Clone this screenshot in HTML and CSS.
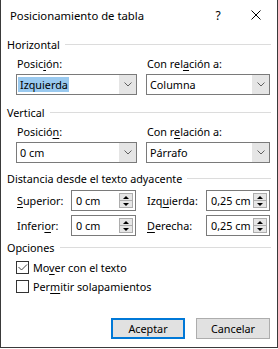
FILE: index.html
```html
<!DOCTYPE html>
<html lang="es">
<head>
  <meta charset="UTF-8">
  <meta name="viewport" content="width=device-width, initial-scale=1.0">
  <title>Posicionamiento de tabla</title>
  <link rel="stylesheet" href="styles.css">
</head>
<body>
  <div class="dialog">
    <div class="titlebar">
      <span class="title">Posicionamiento de tabla</span>
      <span class="help">?</span>
      <span class="close">
        <svg width="10" height="10" viewBox="0 0 10 10"><path d="M0.5 0.5 L9.5 9.5 M9.5 0.5 L0.5 9.5" stroke="#000" stroke-width="1" fill="none"/></svg>
      </span>
    </div>

    <div class="content">
      <div class="group-title">Horizontal</div>
      <div class="pair">
        <div class="field">
          <div class="label">Posic<u>i</u>ón:</div>
          <div class="select">
            <span class="value"><span class="selected">Izquierda</span></span>
            <span class="drop"><svg width="8" height="5" viewBox="0 0 8 5"><path d="M0.5 0.5 L4 4 L7.5 0.5" stroke="#606060" fill="none"/></svg></span>
          </div>
        </div>
        <div class="field">
          <div class="label">Con rel<u>a</u>ción a:</div>
          <div class="select">
            <span class="value">Columna</span>
            <span class="drop"><svg width="8" height="5" viewBox="0 0 8 5"><path d="M0.5 0.5 L4 4 L7.5 0.5" stroke="#606060" fill="none"/></svg></span>
          </div>
        </div>
      </div>

      <div class="group-title second">Vertical</div>
      <div class="pair">
        <div class="field">
          <div class="label">Posició<u>n</u>:</div>
          <div class="select">
            <span class="value">0 cm</span>
            <span class="drop"><svg width="8" height="5" viewBox="0 0 8 5"><path d="M0.5 0.5 L4 4 L7.5 0.5" stroke="#606060" fill="none"/></svg></span>
          </div>
        </div>
        <div class="field">
          <div class="label">Con r<u>e</u>lación a:</div>
          <div class="select">
            <span class="value">Párrafo</span>
            <span class="drop"><svg width="8" height="5" viewBox="0 0 8 5"><path d="M0.5 0.5 L4 4 L7.5 0.5" stroke="#606060" fill="none"/></svg></span>
          </div>
        </div>
      </div>

      <div class="group-title third">Distancia desde el texto adyacente</div>
      <div class="spin-grid">
        <div class="spin-label"><u>S</u>uperior:</div>
        <div class="spin"><span class="value">0 cm</span><span class="arrows"><span class="up"></span><span class="down"></span></span></div>
        <div class="spin-label right">Izq<u>u</u>ierda:</div>
        <div class="spin"><span class="value">0,25 cm</span><span class="arrows"><span class="up"></span><span class="down"></span></span></div>

        <div class="spin-label">Inferi<u>o</u>r:</div>
        <div class="spin"><span class="value">0 cm</span><span class="arrows"><span class="up"></span><span class="down"></span></span></div>
        <div class="spin-label right"><u>D</u>erecha:</div>
        <div class="spin"><span class="value">0,25 cm</span><span class="arrows"><span class="up"></span><span class="down"></span></span></div>
      </div>

      <div class="group-title fourth">Opciones</div>
      <div class="check-row first">
        <span class="checkbox"><svg width="11" height="11" viewBox="0 0 11 11"><path d="M1.5 5 L4.5 8 L10 2.5" stroke="#444" stroke-width="1" fill="none"/></svg></span>
        <span>Mo<u>v</u>er con el texto</span>
      </div>
      <div class="check-row">
        <span class="checkbox"></span>
        <span>Per<u>m</u>itir solapamientos</span>
      </div>
    </div>

    <div class="buttons">
      <button class="btn primary">Aceptar</button>
      <button class="btn">Cancelar</button>
    </div>
  </div>
</body>
</html>
```

FILE: styles.css
```css
* {
  margin: 0;
  padding: 0;
  box-sizing: border-box;
}

body {
  font-family: "Noto Sans", "Liberation Sans", sans-serif;
  font-size: 10.8px;
  color: #000;
  background: #fff;
  width: 278px;
  height: 349px;
}

u {
  text-underline-offset: 2px;
}

.dialog {
  width: 278px;
  height: 348px;
  background: #fff;
  border-left: 1px solid #3a3a3a;
  border-right: 1px solid #3a3a3a;
  border-bottom: 1px solid #3a3a3a;
}

.titlebar {
  height: 30px;
  display: flex;
  align-items: center;
  font-size: 11.3px;
}

.title {
  padding-left: 9px;
  flex: 1;
}

.help {
  width: 28px;
  text-align: center;
  font-size: 12px;
}

.close {
  width: 45px;
  height: 30px;
  display: flex;
  align-items: center;
  justify-content: center;
  padding-left: 2px;
}

.close svg {
  display: block;
}

.content {
  padding: 0 6px 0 6px;
}

.group-title {
  margin-top: 7px;
  height: 15px;
  line-height: 15px;
  display: flex;
  align-items: center;
  gap: 5px;
}

.group-title::after {
  content: "";
  flex: 1;
  height: 1px;
  background: #dcdcdc;
}

.group-title.second {
  margin-top: 10px;
}

.group-title.third {
  margin-top: 8px;
}

.group-title.fourth {
  margin-top: 4px;
}

.pair {
  margin-left: 9px;
  display: grid;
  grid-template-columns: 121px 124px;
  column-gap: 9px;
}

.label {
  margin-top: 4px;
  height: 16px;
  line-height: 16px;
  padding-left: 1px;
}

.select {
  margin-top: 2px;
  height: 21px;
  border: 1px solid #7a7a7a;
  display: flex;
  background: #fff;
}

.select .value {
  flex: 1;
  display: flex;
  align-items: center;
  padding-left: 3px;
}

.selected {
  background: #99c9ef;
  margin-left: -2px;
  padding-left: 2px;
  padding-right: 1px;
  line-height: 15px;
}

.drop {
  width: 17px;
  background: #e5e5e5;
  display: flex;
  align-items: center;
  justify-content: center;
}

.drop svg {
  display: block;
}

.spin-grid {
  margin-top: 4px;
  margin-left: 9px;
  display: grid;
  grid-template-columns: 55px 65px 10px 60px 64px;
  grid-auto-rows: 21px;
  row-gap: 4px;
}

.spin-label {
  display: flex;
  align-items: center;
  padding-left: 1px;
}

.spin-label.right {
  grid-column: 4;
}

.spin {
  border: 1px solid #7a7a7a;
  display: flex;
}

.spin .value {
  flex: 1;
  display: flex;
  align-items: center;
  padding-left: 4px;
}

.arrows {
  width: 14px;
  margin: 2px 2px 2px 0;
  border: 1px solid #adadad;
  display: flex;
  flex-direction: column;
}

.arrows span {
  flex: 1;
  background: #e6e6e6;
  display: flex;
  align-items: center;
  justify-content: center;
}

.arrows .down {
  border-top: 1px solid #adadad;
}

.arrows .up::before {
  content: "";
  border-left: 3px solid transparent;
  border-right: 3px solid transparent;
  border-bottom: 3px solid #000;
}

.arrows .down::before {
  content: "";
  border-left: 3px solid transparent;
  border-right: 3px solid transparent;
  border-top: 3px solid #000;
}

.check-row {
  height: 19px;
  margin-left: 9px;
  display: flex;
  align-items: center;
  gap: 4px;
}

.check-row.first {
  margin-top: 3px;
}

.checkbox {
  width: 13px;
  height: 13px;
  border: 1px solid #333;
  display: flex;
  align-items: center;
  justify-content: center;
}

.checkbox svg {
  display: block;
}

.buttons {
  margin-top: 22px;
  display: flex;
  justify-content: flex-end;
  gap: 11px;
  padding-right: 7px;
}

.btn {
  width: 74px;
  height: 21px;
  font-family: inherit;
  font-size: 10.8px;
  color: #000;
  background: #e1e1e1;
  border: 1px solid #adadad;
}

.btn.primary {
  border: 2px solid #0078d7;
}
```
